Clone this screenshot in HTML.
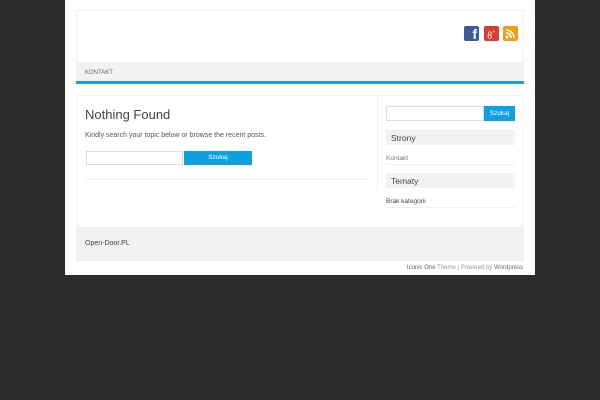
<!DOCTYPE html>
<html><head><meta charset="utf-8"><style>
*{margin:0;padding:0;box-sizing:border-box}
body{width:600px;height:400px;background:#2b2b2b;font-family:"Liberation Sans",sans-serif;position:relative;overflow:hidden}
.abs{position:absolute}
</style></head><body>
<div class="abs" style="left:65px;top:0;width:470px;height:275px;background:#fff"></div>
<div class="abs" style="left:76px;top:10px;width:448px;height:52px;border:1px solid #f0f0f0;border-bottom:none"></div>
<div class="abs" style="left:464px;top:26px;width:15px;height:15px;background:#3b5998;border-radius:2px;color:#fff;font:bold 14px 'Liberation Sans';text-align:right;padding-right:2px;line-height:17px;overflow:hidden">f</div>
<div class="abs" style="left:484px;top:26px;width:15px;height:15px;background:#d73d32;border-radius:2px;color:#fff;font:10px 'Liberation Serif';text-align:center;line-height:14px">8<sup style="font-size:6px">+</sup></div>
<div class="abs" style="left:503px;top:26px;width:15px;height:15px;background:#f39c12;border-radius:2px">
<svg width="15" height="15" viewBox="0 0 15 15"><circle cx="4" cy="11" r="1.5" fill="#fff"/><path d="M3 7a5 5 0 0 1 5 5M3 4a8 8 0 0 1 8 8" stroke="#fff" stroke-width="1.6" fill="none"/></svg></div>
<div class="abs" style="left:76px;top:62px;width:448px;height:19px;background:#f2f2f2;font-size:6px;color:#666;padding:8px 0 0 9px">KONTAKT</div>
<div class="abs" style="left:76px;top:81px;width:448px;height:3px;background:#1e9add"></div>
<div class="abs" style="left:76px;top:95px;width:448px;height:132px;border:1px solid #f2f2f2;border-bottom:none"></div>
<div class="abs" style="left:377px;top:96px;width:1px;height:94px;background:#eee"></div>
<div class="abs" style="left:85px;top:107px;font-size:13px;color:#444">Nothing Found</div>
<div class="abs" style="left:85px;top:132px;font-size:7px;color:#555">Kindly search your topic below or browse the recent posts.</div>
<div class="abs" style="left:86px;top:151px;width:97px;height:14px;border:1px solid #ddd"></div>
<div class="abs" style="left:184px;top:151px;width:68px;height:14px;background:#0fa0e0;color:#fff;font-size:6.5px;text-align:center;line-height:14px">Szukaj</div>
<div class="abs" style="left:85px;top:179px;width:283px;height:1px;background:#f0f0f0"></div>
<div class="abs" style="left:386px;top:106px;width:98px;height:15px;border:1px solid #ddd"></div>
<div class="abs" style="left:484px;top:106px;width:31px;height:15px;background:#0fa0e0;color:#fff;font-size:6.5px;text-align:center;line-height:15px">Szukaj</div>
<div class="abs" style="left:386px;top:130px;width:129px;height:15px;background:#f2f2f2;font-size:8.5px;color:#444;padding:3px 0 0 5px">Strony</div>
<div class="abs" style="left:386px;top:155px;font-size:6.5px;color:#777">Kontakt</div>
<div class="abs" style="left:386px;top:164px;width:129px;height:1px;background:#f0f0f0"></div>
<div class="abs" style="left:386px;top:173px;width:129px;height:15px;background:#f2f2f2;font-size:8.5px;color:#444;padding:3px 0 0 5px">Tematy</div>
<div class="abs" style="left:386px;top:198px;font-size:6.5px;color:#444">Brak kategorii</div>
<div class="abs" style="left:386px;top:207px;width:129px;height:1px;background:#f0f0f0"></div>
<div class="abs" style="left:76px;top:227px;width:448px;height:34px;background:#f1f1f1;font-size:7px;color:#444;padding:13px 0 0 9px">Open-Door.PL</div>
<div class="abs" style="left:300px;top:265px;width:223px;text-align:right;font-size:6px;color:#999"><span style="color:#666">Iconic One</span> Theme | Powered by <span style="color:#666">Wordpress</span></div>
</body></html>
